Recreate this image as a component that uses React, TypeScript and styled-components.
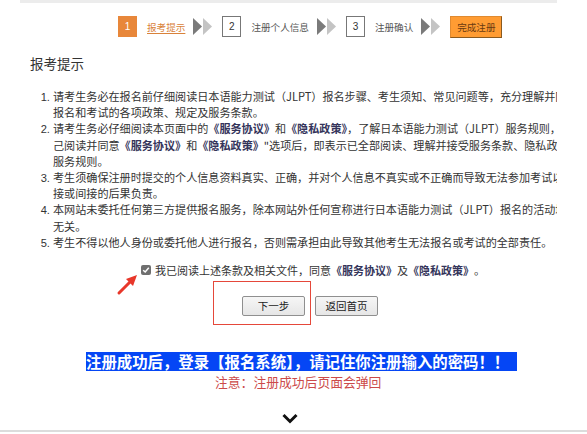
import React from "react";
import styled, { createGlobalStyle } from "styled-components";

const GlobalStyle = createGlobalStyle`
  html, body {
    margin: 0;
    padding: 0;
    background: #fff;
  }
  body {
    font-family: "Noto Sans CJK SC", "Liberation Sans", sans-serif;
    color: #333;
  }
`;

const Page = styled.div`
  position: relative;
  width: 587px;
  height: 434px;
  overflow: hidden;
  background: #fff;
`;

const TopRule = styled.div`
  margin: 0 30px 0 20px;
  height: 3px;
  background: #ececec;
`;

const Steps = styled.div`
  display: flex;
  align-items: center;
  height: 21px;
  margin: 13px 0 0 118px;
`;

const StepNum = styled.div<{ active?: boolean }>`
  width: ${p => (p.active ? "19px" : "17px")};
  height: ${p => (p.active ? "21px" : "19px")};
  box-sizing: content-box;
  display: flex;
  align-items: center;
  justify-content: center;
  font-size: 10px;
  font-family: "Liberation Sans", sans-serif;
  color: ${p => (p.active ? "#fff" : "#333")};
  background: ${p => (p.active ? "#e8873a" : "#fff")};
  border: ${p => (p.active ? "none" : "1px solid #777")};
`;

const StepLabel = styled.span<{ active?: boolean }>`
  margin-left: 10px;
  font-size: 9.6px;
  color: ${p => (p.active ? "#d9823a" : "#555")};
  text-decoration: ${p => (p.active ? "underline" : "none")};
  text-underline-offset: 2px;
`;

const Arrows = styled.svg`
  margin: 0 9px 0 8px;
  flex: none;
`;

const Finish = styled.div`
  display: flex;
  align-items: center;
  justify-content: center;
  width: 50px;
  height: 20px;
  background: #ff9c33;
  border: 1px solid #e08a30;
  border-right-color: #8a5a20;
  border-bottom-color: #8a5a20;
  font-size: 9.6px;
  color: #6a3a10;
`;

const Content = styled.div`
  width: 527px;
  padding-left: 30px;
  overflow: hidden;
`;

const Heading = styled.h2`
  margin: 17px 0 0;
  font-size: 13.5px;
  font-weight: 400;
  line-height: 18px;
  color: #333;
`;

const List = styled.ol`
  margin: 16px 0 0;
  padding: 0 0 0 23px;
  font-size: 11.1px;
  line-height: 16.2px;
  color: #333;
  white-space: nowrap;
`;

const Item = styled.li`
  &::marker {
    font-family: "Liberation Sans", sans-serif;
  }
`;

const Doc = styled.b`
  font-weight: 600;
  color: #34345a;
`;

const AgreeRow = styled.label`
  display: flex;
  align-items: center;
  margin: 13px 0 0 141px;
  font-size: 11px;
  line-height: 14px;
  color: #333;
`;

const Check = styled.span`
  width: 10px;
  height: 10px;
  margin-right: 4px;
  border-radius: 2px;
  background: #6f6f6f;
  display: flex;
  align-items: center;
  justify-content: center;
`;

const ButtonRow = styled.div`
  display: flex;
  align-items: flex-start;
  margin: 4px 0 0 213px;
`;

const Highlight = styled.div`
  display: flex;
  align-items: flex-start;
  height: 28px;
  padding: 14px 5px 0 28px;
  box-sizing: content-box;
  border: 1.5px solid #e5483a;
  margin-right: 4px;
`;

const Btn = styled.button`
  width: 63px;
  height: 20px;
  padding: 0;
  font-family: "Noto Sans CJK SC", sans-serif;
  font-size: 10.5px;
  line-height: 18px;
  color: #222;
  background: linear-gradient(#f6f6f6, #e6e6e6);
  border: 1px solid #8f8f8f;
  border-radius: 2px;
`;

const SideBtn = styled(Btn)`
  margin-top: 15px;
`;

const Banner = styled.div`
  width: 431px;
  height: 19px;
  margin: 27px 0 0 86px;
  background: #0546f5;
  color: #fff;
  font-weight: 700;
  font-size: 15.4px;
  line-height: 19px;
  white-space: nowrap;
  overflow: hidden;
`;

const Notice = styled.div`
  margin: 3px 0 0 215px;
  font-size: 12.8px;
  line-height: 16px;
  color: #cc4a4a;
  white-space: nowrap;
`;

const ChevronWrap = styled.div`
  display: flex;
  margin: 23px 0 0 282px;
`;

const BottomRule = styled.div`
  position: absolute;
  left: 0;
  right: 0;
  top: 430px;
  height: 1.5px;
  background: #dcdcdc;
`;

const PointerArrow = styled.svg`
  position: absolute;
  left: 115px;
  top: 272px;
`;

const StepArrows = () => (
  <Arrows width="20" height="17" viewBox="0 0 20 17">
    <polygon points="0,0 9,8.5 0,17" fill="#7a7a7a" />
    <polygon points="10,0 19,8.5 10,17" fill="#c4c4c4" />
  </Arrows>
);

const App = () => {
  return (
    <Page>
      <GlobalStyle />
      <TopRule />
      <Steps>
        <StepNum active>1</StepNum>
        <StepLabel active>报考提示</StepLabel>
        <StepArrows />
        <StepNum>2</StepNum>
        <StepLabel>注册个人信息</StepLabel>
        <StepArrows />
        <StepNum>3</StepNum>
        <StepLabel>注册确认</StepLabel>
        <StepArrows />
        <Finish>完成注册</Finish>
      </Steps>

      <Content>
        <Heading>报考提示</Heading>
        <List>
          <Item>
            请考生务必在报名前仔细阅读日本语能力测试（JLPT）报名步骤、考生须知、常见问题等，充分理解并同意
            <br />
            报名和考试的各项政策、规定及服务条款。
          </Item>
          <Item>
            请考生务必仔细阅读本页面中的<Doc>《服务协议》</Doc>和<Doc>《隐私政策》</Doc>，了解日本语能力测试（JLPT）服务规则，
            <br />
            己阅读并同意<Doc>《服务协议》</Doc>和<Doc>《隐私政策》</Doc>"选项后，即表示已全部阅读、理解并接受服务条款、隐私政策
            <br />
            服务规则。
          </Item>
          <Item>
            考生须确保注册时提交的个人信息资料真实、正确，并对个人信息不真实或不正确而导致无法参加考试以及
            <br />
            接或间接的后果负责。
          </Item>
          <Item>
            本网站未委托任何第三方提供报名服务，除本网站外任何宣称进行日本语能力测试（JLPT）报名的活动均与
            <br />
            无关。
          </Item>
          <Item>考生不得以他人身份或委托他人进行报名，否则需承担由此导致其他考生无法报名或考试的全部责任。</Item>
        </List>
      </Content>

      <AgreeRow>
        <Check>
          <svg width="8" height="8" viewBox="0 0 8 8">
            <polyline points="1.2,4.2 3.2,6 6.8,1.8" fill="none" stroke="#fff" strokeWidth="1.5" />
          </svg>
        </Check>
        我已阅读上述条款及相关文件，同意<Doc>《服务协议》</Doc>及<Doc>《隐私政策》</Doc>。
      </AgreeRow>

      <ButtonRow>
        <Highlight>
          <Btn>下一步</Btn>
        </Highlight>
        <SideBtn>返回首页</SideBtn>
      </ButtonRow>

      <Banner>注册成功后，登录【报名系统】，请记住你注册输入的密码！！</Banner>
      <Notice>注意：注册成功后页面会弹回</Notice>

      <ChevronWrap>
        <svg width="16" height="11" viewBox="0 0 16 11">
          <polyline points="1.5,2 8,8.5 14.5,2" fill="none" stroke="#111" strokeWidth="3" />
        </svg>
      </ChevronWrap>

      <BottomRule />

      <PointerArrow width="26" height="26" viewBox="0 0 26 26">
        <line x1="4" y1="21" x2="16" y2="9" stroke="#e8372a" strokeWidth="3" strokeLinecap="round" />
        <polygon points="22,3 11,7 18,14" fill="#e8372a" />
      </PointerArrow>
    </Page>
  );
};

export default App;
